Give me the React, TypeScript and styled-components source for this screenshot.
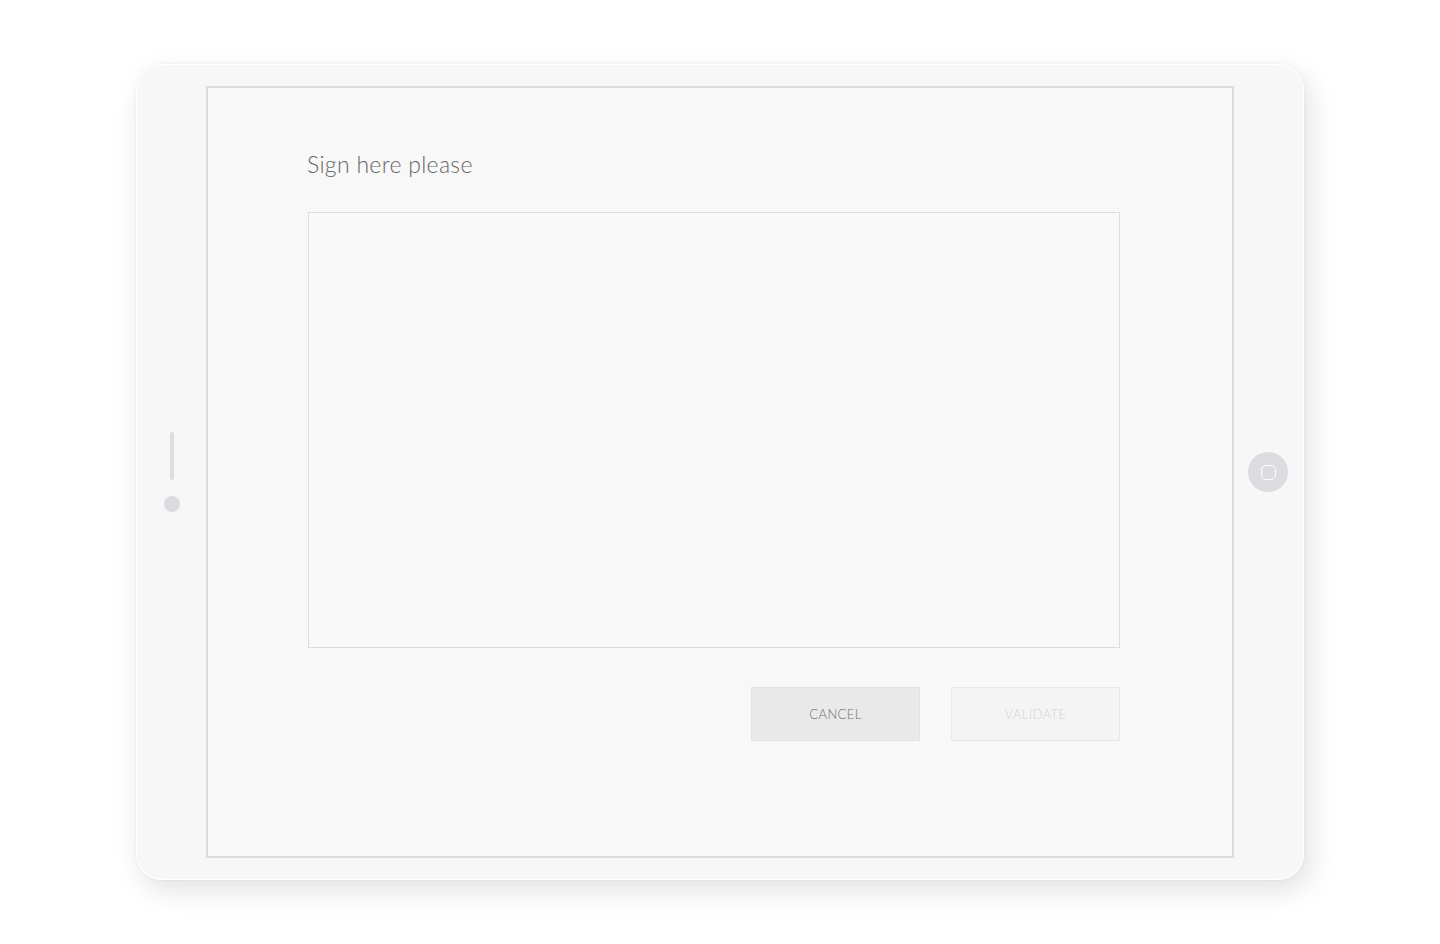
import styled, { createGlobalStyle } from "styled-components";

const GlobalStyle = createGlobalStyle`
  html, body {
    margin: 0;
    padding: 0;
    background: #ffffff;
    font-family: "Lato", "Liberation Sans", sans-serif;
  }
  * {
    box-sizing: border-box;
  }
`;

const Page = styled.div`
  width: 1440px;
  height: 944px;
  display: flex;
  justify-content: center;
  padding-top: 64px;
`;

const Device = styled.div`
  display: flex;
  width: 1168px;
  height: 816px;
  padding: 22px 0;
  border-radius: 26px;
  background: #f7f7f7;
  box-shadow: inset 0 0 0 1px #ffffff, 0 0 3px rgba(0, 0, 0, 0.06),
    6px 10px 28px rgba(0, 0, 0, 0.12);
`;

const Bezel = styled.div`
  width: 70px;
  display: flex;
  flex-direction: column;
  align-items: center;
  justify-content: center;
`;

const SideBar = styled.div`
  width: 4px;
  height: 48px;
  border-radius: 2px;
  background: #dedee2;
  margin-bottom: 16px;
  margin-left: 2px;
`;

const SideDot = styled.div`
  width: 16px;
  height: 16px;
  border-radius: 50%;
  background: #dcdce0;
  margin-left: 2px;
`;

const HomeButton = styled.div`
  width: 40px;
  height: 40px;
  border-radius: 50%;
  background: #dcdce0;
  display: flex;
  align-items: center;
  justify-content: center;
  margin-left: -2px;
`;

const HomeSquare = styled.div`
  width: 15px;
  height: 15px;
  border: 1.5px solid #ffffff;
  border-radius: 5px;
`;

const Screen = styled.div`
  flex: 1;
  background: #f8f8f8;
  border: 2px solid #dcdce0;
  padding: 62px 0 0 99px;
`;

const Content = styled.div`
  width: 813px;
  display: flex;
  flex-direction: column;
`;

const Title = styled.h1`
  margin: 0;
  font-size: 23px;
  line-height: 28px;
  font-weight: 300;
  color: #666666;
  letter-spacing: 0.3px;
`;

const SignatureBox = styled.div`
  margin-top: 34px;
  margin-left: 1px;
  height: 436px;
  border: 1px solid #dddddd;
  background: #f9f9f9;
`;

const Actions = styled.div`
  margin-top: 39px;
  display: flex;
  justify-content: flex-end;
  gap: 31px;
`;

const Button = styled.button<{ disabled?: boolean }>`
  width: 169px;
  height: 54px;
  border: 1px solid ${(props) => (props.disabled ? "#e9e9e9" : "#e2e2e2")};
  background: ${(props) => (props.disabled ? "#f4f4f4" : "#e9e9e9")};
  color: ${(props) => (props.disabled ? "#d2d2d2" : "#707070")};
  font-family: "Lato", "Liberation Sans", sans-serif;
  font-size: 13px;
  font-weight: 300;
  letter-spacing: 0.4px;
  text-transform: uppercase;
  padding: 0;
  cursor: pointer;
`;

function App() {
  return (
    <>
      <GlobalStyle />
      <Page>
        <Device>
          <Bezel>
            <SideBar />
            <SideDot />
          </Bezel>
          <Screen>
            <Content>
              <Title>Sign here please</Title>
              <SignatureBox />
              <Actions>
                <Button>Cancel</Button>
                <Button disabled>Validate</Button>
              </Actions>
            </Content>
          </Screen>
          <Bezel>
            <HomeButton>
              <HomeSquare />
            </HomeButton>
          </Bezel>
        </Device>
      </Page>
    </>
  );
}

export default App;
